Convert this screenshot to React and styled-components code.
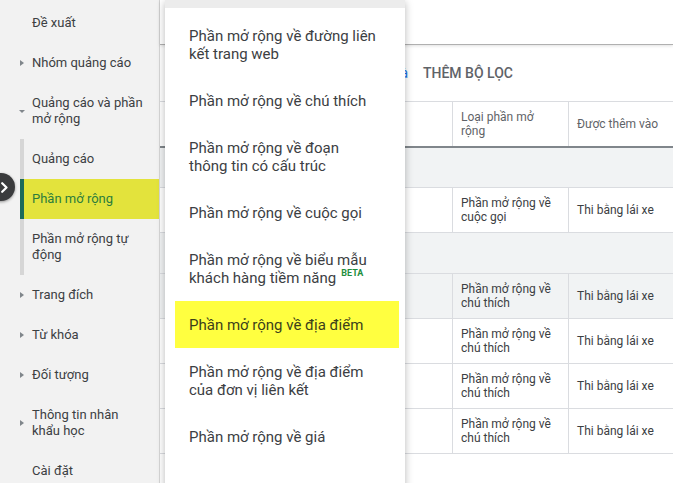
import React from "react";
import styled, { createGlobalStyle, css } from "styled-components";

const GlobalStyle = createGlobalStyle`
  html, body {
    margin: 0;
    padding: 0;
    background: #ffffff;
  }
  body {
    font-family: Roboto, "Noto Sans", Arial, sans-serif;
  }
  * {
    box-sizing: border-box;
  }
`;

const Screen = styled.div`
  position: relative;
  width: 673px;
  height: 483px;
  overflow: hidden;
  display: grid;
  grid-template-columns: 160px 1fr;
  background: #ffffff;
`;

/* ---------- sidebar ---------- */

const Sidebar = styled.nav`
  background: #f2f2f2;
  border-right: 1px solid #d6d6d6;
  padding-top: 3px;
  font-size: 13px;
  line-height: 16px;
  color: #3c4043;
`;

const NavItem = styled.div`
  display: flex;
  align-items: center;
  padding: 12px 8px 12px 20px;
`;

const Caret = styled.span`
  flex: none;
  width: 12px;
  height: 16px;
  display: flex;
  align-items: center;

  ${(p) =>
    p.$dir === "right" &&
    css`
      &::before {
        content: "";
        border-left: 4px solid #80868b;
        border-top: 3px solid transparent;
        border-bottom: 3px solid transparent;
      }
    `}

  ${(p) =>
    p.$dir === "down" &&
    css`
      &::before {
        content: "";
        margin-left: -1px;
        border-top: 3px solid #80868b;
        border-left: 3px solid transparent;
        border-right: 3px solid transparent;
      }
    `}
`;

const SubGroup = styled.div`
  margin-left: 20px;
`;

const SubItem = styled.div`
  padding: 12px 8px;
  border-left: 4px solid #d6d6d6;

  ${(p) =>
    p.$selected &&
    css`
      background: #e3e33c;
      border-left-color: #1d6a5a;
      color: #2c7d3c;
    `}
`;

const ToggleButton = styled.button`
  position: absolute;
  left: -13px;
  top: 173px;
  width: 28px;
  height: 28px;
  border: 0;
  border-radius: 50%;
  padding: 0 7px 0 0;
  background: #3a3b3d;
  box-shadow: 0 1px 3px rgba(0, 0, 0, 0.4);
  display: flex;
  align-items: center;
  justify-content: flex-end;
`;

/* ---------- main ---------- */

const Main = styled.main`
  display: flex;
  flex-direction: column;
  min-width: 0;
`;

const TopBar = styled.header`
  height: 45px;
  flex: none;
  border-bottom: 1px solid #b0b0b0;
  box-shadow: 0 1px 3px rgba(0, 0, 0, 0.12);
`;

const FilterBar = styled.div`
  height: 56px;
  flex: none;
  display: flex;
  align-items: center;
  gap: 15px;
  padding-left: 24px;
`;

const FilterChip = styled.span`
  width: 224px;
  text-align: right;
  white-space: nowrap;
  overflow: hidden;
  color: #1a73e8;
  font-size: 14px;
`;

const AddFilter = styled.button`
  border: 0;
  background: none;
  padding: 0;
  font-family: Roboto, Arial, sans-serif;
  font-size: 14px;
  font-weight: 500;
  color: #5f6368;
  text-transform: uppercase;
`;

const Table = styled.div`
  border-top: 1px solid #dadce0;
  font-size: 12px;
  line-height: 14px;
  color: #3c4043;
`;

const Row = styled.div`
  display: grid;
  grid-template-columns: 292px 116px 1fr;
  height: 45px;
  border-bottom: 1px solid #dadce0;
  background: ${(p) => (p.$shade ? "#f1f3f4" : "#ffffff")};

  ${(p) =>
    p.$head &&
    css`
      height: 46px;
      border-bottom: 2px solid #80868b;
      color: #5f6368;
    `}
`;

const GroupRow = styled.div`
  height: ${(p) => p.$h || 40}px;
  background: #f1f3f4;
  border-bottom: 1px solid #dadce0;
`;

const Cell = styled.div`
  display: flex;
  align-items: center;
  padding: 0 8px;
  border-left: ${(p) => (p.$first ? "0" : "1px solid #dadce0")};
`;

/* ---------- dropdown menu ---------- */

const Menu = styled.ul`
  position: absolute;
  left: 165px;
  top: 0;
  width: 240px;
  height: 500px;
  margin: 0;
  padding: 4px 0 0;
  list-style: none;
  background: #ffffff;
  border-top: 8px solid #ececec;
  box-shadow: 0 2px 8px rgba(0, 0, 0, 0.28);
  font-size: 15px;
  line-height: 18px;
  color: #3c4043;
`;

const MenuItem = styled.li`
  padding: 15px 16px 14px 24px;
  white-space: nowrap;

  ${(p) =>
    p.$active &&
    css`
      background: #ffff40;
      margin: 0 6px 0 10px;
      padding-left: 14px;
      color: #3c3f1a;
    `}
`;

const Beta = styled.sup`
  margin-left: 5px;
  font-size: 9px;
  font-weight: 700;
  color: #1e8e3e;
  vertical-align: 7px;
  line-height: 0;
`;

const navItems = [
  { label: "Đề xuất" },
  { label: "Nhóm quảng cáo", caret: "right" },
  { label: ["Quảng cáo và phần", "mở rộng"], caret: "down" },
];

const subItems = [
  { label: ["Quảng cáo"] },
  { label: ["Phần mở rộng"], selected: true },
  { label: ["Phần mở rộng tự", "động"] },
];

const navItemsBottom = [
  { label: "Trang đích", caret: "right" },
  { label: "Từ khóa", caret: "right" },
  { label: "Đối tượng", caret: "right" },
  { label: ["Thông tin nhân", "khẩu học"], caret: "right" },
  { label: "Cài đặt" },
];

const menuItems = [
  { label: ["Phần mở rộng về đường liên", "kết trang web"] },
  { label: ["Phần mở rộng về chú thích"] },
  { label: ["Phần mở rộng về đoạn", "thông tin có cấu trúc"] },
  { label: ["Phần mở rộng về cuộc gọi"] },
  { label: ["Phần mở rộng về biểu mẫu", "khách hàng tiềm năng"], beta: true },
  { label: ["Phần mở rộng về địa điểm"], active: true },
  { label: ["Phần mở rộng về địa điểm", "của đơn vị liên kết"] },
  { label: ["Phần mở rộng về giá"] },
];

const Lines = ({ text, children }) => {
  const lines = Array.isArray(text) ? text : [text];
  return (
    <span>
      {lines.map((line, i) => (
        <React.Fragment key={i}>
          {i > 0 && <br />}
          {line}
        </React.Fragment>
      ))}
      {children}
    </span>
  );
};

const Nav = ({ items }) =>
  items.map((item, i) => (
    <NavItem key={i}>
      <Caret $dir={item.caret} />
      <Lines text={item.label} />
    </NavItem>
  ));

const DataRow = ({ type, shade }) => (
  <Row $shade={shade}>
    <Cell $first />
    <Cell>
      <Lines text={["Phần mở rộng về", type]} />
    </Cell>
    <Cell>Thi bằng lái xe</Cell>
  </Row>
);

const App = () => {
  return (
    <>
      <GlobalStyle />
      <Screen>
        <Sidebar>
          <Nav items={navItems} />
          <SubGroup>
            {subItems.map((item, i) => (
              <SubItem key={i} $selected={item.selected}>
                <Lines text={item.label} />
              </SubItem>
            ))}
          </SubGroup>
          <Nav items={navItemsBottom} />
        </Sidebar>

        <Main>
          <TopBar />
          <FilterBar>
            <FilterChip>Cấp độ: Tài khoản và</FilterChip>
            <AddFilter>Thêm bộ lọc</AddFilter>
          </FilterBar>
          <Table>
            <Row $head>
              <Cell $first />
              <Cell>
                <Lines text={["Loại phần mở", "rộng"]} />
              </Cell>
              <Cell>Được thêm vào</Cell>
            </Row>
            <GroupRow />
            <DataRow type="cuộc gọi" />
            <GroupRow $h={41} />
            <DataRow type="chú thích" shade />
            <DataRow type="chú thích" />
            <DataRow type="chú thích" />
            <DataRow type="chú thích" />
          </Table>
        </Main>

        <Menu>
          {menuItems.map((item, i) => (
            <MenuItem key={i} $active={item.active}>
              <Lines text={item.label}>{item.beta && <Beta>BETA</Beta>}</Lines>
            </MenuItem>
          ))}
        </Menu>

        <ToggleButton aria-label="Mở rộng">
          <svg width="7" height="11" viewBox="0 0 7 11" fill="none">
            <path
              d="M1.2 1.2 L5.5 5.5 L1.2 9.8"
              stroke="#ffffff"
              strokeWidth="2.2"
              strokeLinecap="round"
              strokeLinejoin="round"
            />
          </svg>
        </ToggleButton>
      </Screen>
    </>
  );
};

export default App;
